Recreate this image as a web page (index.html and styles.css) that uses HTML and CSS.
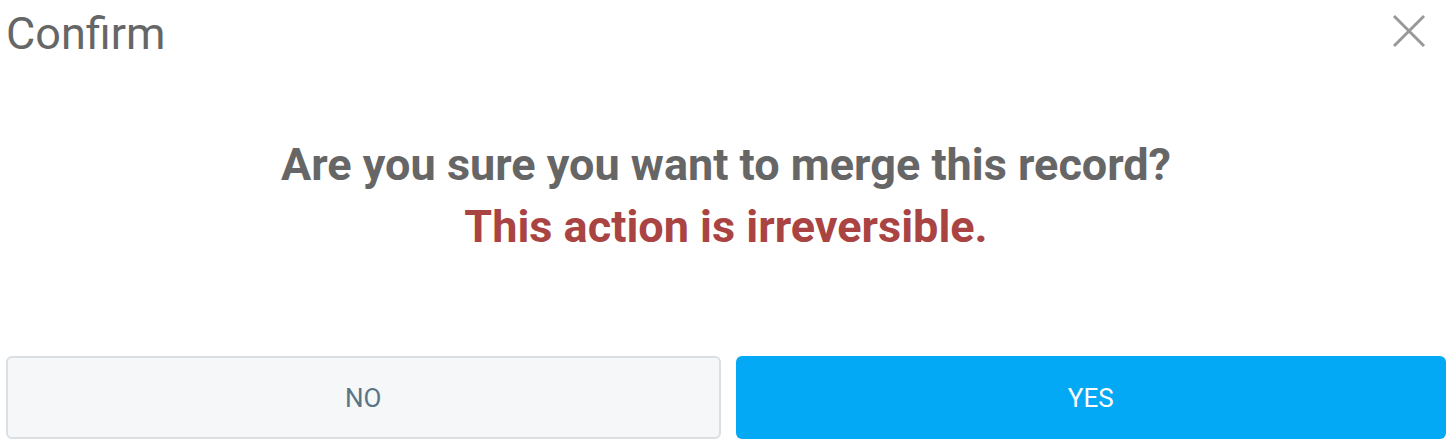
FILE: index.html
```html
<!DOCTYPE html>
<html>
<head>
<meta charset="utf-8">
<link rel="stylesheet" href="styles.css">
</head>
<body>
<div class="dialog">
  <div class="header">
    <h1 class="title">Confirm</h1>
    <button class="close" aria-label="Close">
      <svg width="34" height="34" viewBox="0 0 34 34"><path d="M2 2 L32 32 M32 2 L2 32" stroke="#999" stroke-width="3" fill="none"/></svg>
    </button>
  </div>
  <div class="body">
    <p class="question">Are you sure you want to merge this record?</p>
    <p class="warning">This action is irreversible.</p>
  </div>
  <div class="footer">
    <button class="btn btn-no">NO</button>
    <button class="btn btn-yes">YES</button>
  </div>
</div>
</body>
</html>
```
FILE: styles.css
```css
* { box-sizing: border-box; }
html, body { margin: 0; padding: 0; background: #fff; }
body { font-family: Roboto, "Liberation Sans", sans-serif; }
.dialog {
  width: 1449px;
  height: 444px;
  display: flex;
  flex-direction: column;
  padding: 0 3px 5px 6px;
}
.header {
  display: flex;
  justify-content: space-between;
  align-items: flex-start;
  height: 90px;
}
.title {
  margin: 0;
  padding: 7px 0 0 0;
  font-weight: 400;
  font-size: 45px;
  line-height: 54px;
  color: #666;
}
.close {
  border: 0;
  background: none;
  padding: 0;
  margin: 14px 20px 0 0;
  width: 34px;
  height: 34px;
  cursor: pointer;
}
.close svg { display: block; }
.body {
  flex: 1;
  text-align: center;
  padding-top: 44px;
}
.question, .warning {
  margin: 0;
  font-weight: 700;
  font-size: 45px;
  line-height: 62px;
}
.question { color: #666; }
.warning { color: #a94442; }
.footer {
  display: flex;
  gap: 15px;
  height: 83px;
}
.btn {
  flex: 1 1 0;
  font-family: Roboto, "Liberation Sans", sans-serif;
  font-size: 26px;
  border-radius: 6px;
  cursor: pointer;
}
.btn-no {
  background: #f5f7f9;
  border: 2px solid #d9dfe3;
  color: #5a7586;
}
.btn-yes {
  background: #03a9f4;
  border: 0;
  color: #fff;
}
```
